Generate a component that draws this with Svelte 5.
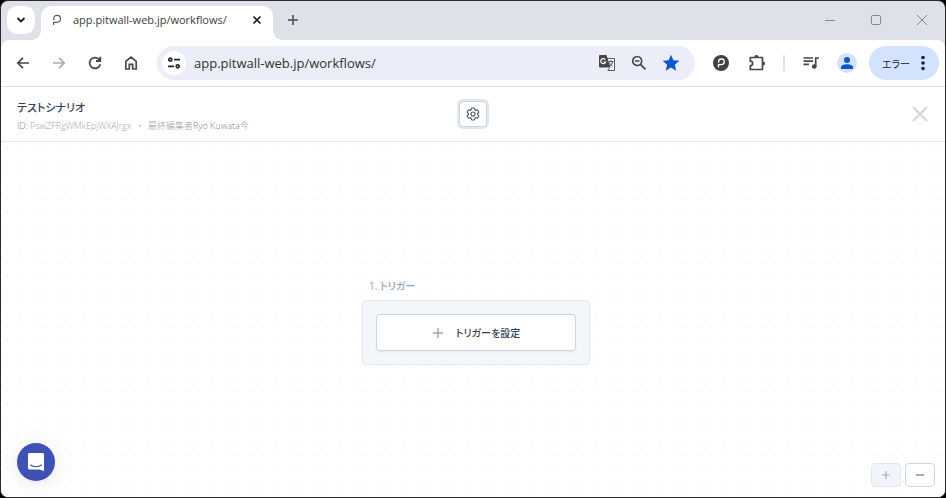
<script>
  const offsets = [0, 13, 26, 38, 51];
  let address = $state('app.pitwall-web.jp/workflows/');
</script>

<div class="window">
  <div class="tabstrip">
    <button class="search-tabs" aria-label="タブを検索">
      <svg width="12" height="12" viewBox="0 0 12 12"><path d="M2.500 4 6 7.500 9.500 4" fill="none" stroke="#1f1f1f" stroke-width="1.800" /></svg>
    </button>
    <div class="tab">
      <svg width="10" height="12" viewBox="0 0 10 12"><path d="M1.600 11V8.300H4.800Q8.500 8.300 8.500 4.800Q8.500 1.400 5.200 1.400Q1.800 1.400 1.800 4.500V6" fill="none" stroke="#55585c" stroke-width="1.200" /></svg>
      <span class="tab-title">app.pitwall-web.jp/workflows/</span>
      <button class="plain" aria-label="タブを閉じる">
        <svg width="10" height="10" viewBox="0 0 10 10"><path d="m1.500 1.500 7 7m0-7-7 7" stroke="#1f1f1f" stroke-width="1.700" /></svg>
      </button>
    </div>
    <button class="plain new-tab" aria-label="新しいタブ">
      <svg width="12" height="12" viewBox="0 0 12 12"><path d="M6 1v10M1 6h10" stroke="#474747" stroke-width="1.500" /></svg>
    </button>
    <div class="controls">
      <button class="plain" aria-label="最小化"><svg width="12" height="12" viewBox="0 0 12 12"><path d="M1 6.500h10" stroke="#85888c" /></svg></button>
      <button class="plain" aria-label="最大化"><svg width="12" height="12" viewBox="0 0 12 12"><rect x="1.500" y="1.500" width="9" height="9" rx="1" fill="none" stroke="#85888c" /></svg></button>
      <button class="plain" aria-label="閉じる"><svg width="12" height="12" viewBox="0 0 12 12"><path d="m1 1 10 10M11 1 1 11" stroke="#85888c" /></svg></button>
    </div>
  </div>

  <div class="toolbar">
    <nav class="nav">
      <button class="plain" aria-label="戻る"><svg width="16" height="16" viewBox="0 0 16 16"><path d="M14 8H3M8 2.800 2.800 8 8 13.200" fill="none" stroke="#474747" stroke-width="1.700" /></svg></button>
      <button class="plain" aria-label="進む"><svg width="16" height="16" viewBox="0 0 16 16"><path d="M2 8h11M8 2.800 13.200 8 8 13.200" fill="none" stroke="#ababab" stroke-width="1.700" /></svg></button>
      <button class="plain" aria-label="再読み込み"><svg width="16" height="16" viewBox="0 0 16 16"><path d="M13.300 9.200A5.400 5.400 0 1 1 12 4.300L13.400 6M13.300 1.800V6H9" fill="none" stroke="#474747" stroke-width="1.800" /></svg></button>
      <button class="plain" aria-label="ホーム"><svg width="16" height="16" viewBox="0 0 16 16"><path d="M2.800 6.300 8 2l5.200 4.300V14H9.700V9.300H6.300V14H2.800Z" fill="none" stroke="#474747" stroke-width="1.700" /></svg></button>
    </nav>
    <div class="omnibox">
      <button class="site-info" aria-label="サイト情報">
        <svg width="14" height="12" viewBox="0 0 14 12" fill="none" stroke="#262626" stroke-width="1.700"><circle cx="3.300" cy="2.700" r="1.500" /><path d="M7 2.700h6M1 9.300h6" /><circle cx="10.700" cy="9.300" r="1.500" /></svg>
      </button>
      <input class="url" aria-label="アドレス" bind:value={address} />
      <button class="plain" aria-label="翻訳">
        <svg width="18" height="18" viewBox="0 0 18 18"><path d="M8 4.500h8.500v12H10" fill="#fff" stroke="#55585c" /><path d="M2 1h6.500L12.500 13.500H2a1 1 0 0 1-1-1V2a1 1 0 0 1 1-1Z" fill="#474747" /><path d="M7.300 5.700A2.500 2.500 0 1 0 7.600 8H5.400" fill="none" stroke="#fff" stroke-width="1.200" /><path d="M10.500 7.500h5M13 6v1.500M14.800 7.500q-.8 3-3 4.500M11.500 8.500q1.500 3 3.500 4M9.500 16.500l2.500-3" fill="none" stroke="#55585c" /></svg>
      </button>
      <button class="plain" aria-label="ズーム">
        <svg width="18" height="18" viewBox="0 0 18 18" fill="none" stroke="#474747" stroke-width="1.700"><circle cx="7.200" cy="7" r="4.500" /><path d="m10.500 10.300 5 5" /><path d="M5 7h4.400" stroke-width="1.400" /></svg>
      </button>
      <button class="plain" aria-label="ブックマーク">
        <svg width="18" height="18" viewBox="0 0 18 18"><path d="m9 .8 2.400 5.500 6 .5-4.500 4 1.300 5.900L9 13.500l-5.200 3.200 1.300-5.900-4.500-4 6-.5Z" fill="#0b57d0" /></svg>
      </button>
    </div>
    <div class="extensions">
      <button class="plain" aria-label="Pitwall">
        <svg width="18" height="18" viewBox="0 0 18 18"><circle cx="9" cy="9" r="8" fill="#3f4246" /><path d="M6.500 13.500V10.600H9.300Q12.300 10.600 12.300 7.800Q12.300 5 9.500 5Q6.600 5 6.600 7.800V8.800" fill="none" stroke="#fff" stroke-width="1.300" /></svg>
      </button>
      <button class="plain" aria-label="拡張機能">
        <svg width="18" height="18" viewBox="0 0 18 18"><path d="M2.300 3.500h12.200v12H2.300v-3.700a2.200 2.200 0 0 0 0-4.600Z" fill="none" stroke="#474747" stroke-width="1.700" stroke-linejoin="round" /><path d="M6.300 3a2.100 2.100 0 0 1 4.200 0ZM15 7.400a2.100 2.100 0 0 1 0 4.200Z" fill="#474747" /></svg>
      </button>
      <span class="divider"></span>
      <button class="plain" aria-label="メディア">
        <svg width="18" height="18" viewBox="0 0 18 18"><path d="M1.500 4h9.500M1.500 7.200h9.500M1.500 10.400h5.500M13.700 13V4h3.300" fill="none" stroke="#474747" stroke-width="1.700" /><circle cx="12.200" cy="12.500" r="2.300" fill="#474747" /></svg>
      </button>
      <button class="profile" aria-label="プロフィール">
        <svg width="14" height="14" viewBox="0 0 14 14" fill="#0b57d0"><circle cx="7" cy="4" r="3" /><path d="M1 13v-1.800C1 9.200 4 8.200 7 8.200s6 1 6 3V13Z" /></svg>
      </button>
    </div>
    <button class="error">
      <span>エラー</span>
      <svg width="6" height="16" viewBox="0 0 6 16" fill="#14213f"><circle cx="3" cy="2.500" r="1.800" /><circle cx="3" cy="8" r="1.800" /><circle cx="3" cy="13.500" r="1.800" /></svg>
    </button>
  </div>

  <header class="header">
    <div class="heading">
      <h1>テストシナリオ</h1>
      <p><span class="label">ID:</span> PswZFRgWMkEpjWXAJrgx<span class="sep">・</span>最終編集者<span class="label">Ryo Kuwata</span>今</p>
    </div>
    <button class="settings" aria-label="設定">
      <svg width="16" height="16" viewBox="0 0 24 24" fill="none" stroke="#475569" stroke-width="1.700" stroke-linejoin="round"><path d="M9.600 3.900c.1-.5.600-.9 1.100-.9h2.600c.5 0 1 .4 1.100.9l.2 1.300c.1.400.3.700.6.900l.3.200c.3.200.7.200 1.100.1l1.200-.5c.5-.2 1.100 0 1.400.5l1.300 2.200c.3.500.2 1.100-.3 1.400l-1 .8c-.3.300-.4.600-.4 1v.4c0 .4.100.7.400 1l1 .8c.4.400.5 1 .3 1.400l-1.300 2.200c-.3.500-.9.700-1.400.5l-1.200-.5c-.4-.1-.8-.1-1.100.1l-.3.200c-.3.200-.5.500-.6.900l-.2 1.300c-.1.500-.6.900-1.100.9h-2.600c-.5 0-1-.4-1.100-.9l-.2-1.300c-.1-.4-.3-.7-.6-.9l-.3-.2c-.3-.2-.7-.2-1.100-.1l-1.200.5c-.5.200-1.100 0-1.400-.5l-1.300-2.200c-.3-.5-.2-1.100.3-1.400l1-.8c.3-.3.400-.6.400-1v-.4c0-.4-.1-.7-.4-1l-1-.8c-.4-.4-.5-1-.3-1.400l1.300-2.200c.3-.5.900-.7 1.400-.5l1.200.5c.4.100.8.100 1.100-.1l.3-.2c.3-.2.500-.5.600-.9Z" /><circle cx="12" cy="12" r="3" /></svg>
    </button>
    <button class="plain close" aria-label="閉じる">
      <svg width="16" height="16" viewBox="0 0 16 16"><path d="m1 1 14 14M15 1 1 15" stroke="#cbd5e1" stroke-width="1.800" /></svg>
    </button>
  </header>

  <main class="canvas">
    <svg class="dots" width="100%" height="100%" aria-hidden="true">
      <defs>
        <pattern id="grid" width="64" height="64" patternUnits="userSpaceOnUse">
          {#each offsets as y}
            {#each offsets as x}
              <rect x={x + 6} y={y + 6} width="1" height="1" fill="#e3e5e9" />
            {/each}
          {/each}
        </pattern>
      </defs>
      <rect width="100%" height="100%" fill="url(#grid)" />
    </svg>
    <section class="step">
      <h2>1. トリガー</h2>
      <div class="card">
        <button class="trigger">
          <svg width="12" height="12" viewBox="0 0 12 12"><path d="M6 1v10M1 6h10" stroke="#94a3b8" stroke-width="1.400" /></svg>
          <span>トリガーを設定</span>
        </button>
      </div>
    </section>
    <button class="chat" aria-label="チャット">
      <svg width="18" height="20" viewBox="0 0 18 20"><path d="M2.500 1h13A1.500 1.500 0 0 1 17 2.500V19l-4.500-1.500h-10A1.500 1.500 0 0 1 1 16V2.500A1.500 1.500 0 0 1 2.500 1Z" fill="#fff" /><path d="M3.500 13Q9 16.500 14.500 13" fill="none" stroke="#3f51b5" stroke-width="1.100" stroke-linecap="round" /></svg>
    </button>
    <div class="zoom">
      <button aria-label="拡大" disabled><svg width="10" height="10" viewBox="0 0 10 10"><path d="M5 1v8M1 5h8" stroke="#a3afc0" stroke-width="1.200" /></svg></button>
      <button aria-label="縮小"><svg width="10" height="10" viewBox="0 0 10 10"><path d="M1 5h8" stroke="#475569" stroke-width="1.200" /></svg></button>
    </div>
  </main>
</div>

<style>
  :global(body) {
    background: #000;
  }
  .window {
    box-sizing: border-box;
    height: 100vh;
    display: flex;
    flex-direction: column;
    overflow: hidden;
    border: 1px solid #28292c;
    border-radius: 8px;
    background: #dee1e8;
    font-family: 'Open Sans', 'Noto Sans CJK JP', sans-serif;
    font-feature-settings: 'palt';
  }
  button {
    font: inherit;
    font-feature-settings: inherit;
    box-sizing: border-box;
    display: flex;
    align-items: center;
    justify-content: center;
    padding: 0;
    border: 0;
    flex: none;
  }
  svg {
    display: block;
    flex: none;
  }
  .plain {
    background: none;
  }
  .tabstrip {
    display: flex;
    align-items: flex-start;
    height: 39px;
    flex: none;
    padding-left: 6px;
  }
  .search-tabs {
    width: 28px;
    height: 28px;
    margin: 5px 6px 0 0;
    border-radius: 10px;
    background: #fff;
  }
  .tab {
    position: relative;
    box-sizing: border-box;
    display: flex;
    align-items: center;
    width: 232px;
    height: 34px;
    margin-top: 5px;
    padding: 0 11px 6px;
    border-radius: 10px 10px 0 0;
    background: #fff;
  }
  .tab::before,
  .tab::after {
    content: '';
    position: absolute;
    bottom: 0;
    width: 10px;
    height: 10px;
  }
  .tab::before {
    right: 100%;
    background: radial-gradient(circle at 0 0, transparent 10px, #fff 10px);
  }
  .tab::after {
    left: 100%;
    background: radial-gradient(circle at 100% 0, transparent 10px, #fff 10px);
  }
  .tab-title {
    flex: 1;
    margin-left: 11px;
    font-size: 11px;
    line-height: 16px;
    color: #3c4043;
    white-space: nowrap;
  }
  .new-tab {
    width: 28px;
    height: 28px;
    margin: 5px 0 0 6px;
  }
  .controls {
    display: flex;
    margin-left: auto;
  }
  .controls button {
    width: 46px;
    height: 38px;
  }
  .toolbar {
    display: flex;
    align-items: center;
    box-sizing: border-box;
    height: 47px;
    flex: none;
    padding: 0 6px 0 4px;
    border-bottom: 1px solid #dfe1e3;
    border-radius: 8px 8px 0 0;
    background: #fff;
  }
  .nav {
    display: flex;
  }
  .nav button {
    width: 36px;
    height: 34px;
  }
  .omnibox {
    display: flex;
    align-items: center;
    box-sizing: border-box;
    flex: 1;
    min-width: 0;
    height: 34px;
    margin-left: 8px;
    padding: 0 8px 0 5px;
    border-radius: 17px;
    background: #ebeef8;
  }
  .omnibox .plain {
    width: 32px;
    height: 32px;
  }
  .site-info {
    width: 24px;
    height: 24px;
    border-radius: 12px;
    background: #fff;
  }
  .url {
    flex: 1;
    min-width: 0;
    margin: 0 0 0 8px;
    padding: 0;
    border: 0;
    outline: 0;
    background: none;
    font-family: inherit;
    font-size: 13px;
    line-height: 20px;
    color: #303134;
  }
  .extensions {
    display: flex;
    align-items: center;
    margin: 0 12px 0 8px;
  }
  .extensions .plain {
    width: 36px;
    height: 34px;
  }
  .divider {
    width: 2px;
    height: 16px;
    margin: 0 8px;
    background: #d3e3fd;
  }
  .profile {
    width: 20px;
    height: 20px;
    margin-left: 8px;
    border-radius: 10px;
    background: #d3e3fd;
  }
  .error {
    gap: 10px;
    width: 70px;
    height: 34px;
    border-radius: 17px;
    background: #d3e3fd;
    color: #14213f;
    font-size: 10px;
  }
  .header {
    display: grid;
    grid-template-columns: 1fr auto 1fr;
    align-items: center;
    box-sizing: border-box;
    height: 55px;
    flex: none;
    padding: 0 16px;
    border-bottom: 1px solid #e2e8f0;
    background: #fff;
  }
  .heading {
    padding-top: 4px;
  }
  h1 {
    margin: 0;
    font-size: 11px;
    line-height: 20px;
    font-weight: 500;
    color: #334155;
  }
  p {
    margin: 0;
    font-size: 9px;
    line-height: 16px;
    font-weight: 300;
    color: #9ba3af;
    white-space: nowrap;
  }
  .label {
    color: #7b828d;
  }
  .sep {
    margin: 0 6px;
  }
  .settings {
    width: 28px;
    height: 26px;
    border: 1px solid #cbd5e1;
    border-radius: 4px;
    background: #fff;
    box-shadow: 0 0 0 2px #e2e8f0;
  }
  .close {
    justify-self: end;
    width: 18px;
    height: 18px;
  }
  .canvas {
    position: relative;
    display: flex;
    align-items: center;
    justify-content: center;
    flex: 1;
    min-height: 0;
    padding: 4px 0 0 6px;
    background: #fff;
  }
  .dots {
    position: absolute;
    inset: 0;
  }
  .step {
    position: relative;
  }
  h2 {
    margin: 0 0 6px 7px;
    font-size: 10px;
    line-height: 16px;
    font-weight: 500;
    color: #94a3b8;
  }
  .card {
    padding: 13px;
    border: 1px solid #e2e8f0;
    border-radius: 4px;
    background: #f3f7fa;
  }
  .trigger {
    gap: 12px;
    width: 200px;
    height: 37px;
    border: 1px solid #cbd5e1;
    border-radius: 4px;
    background: #fff;
    box-shadow: 0 1px 2px #0000000d;
    font-size: 10px;
    font-weight: 500;
    color: #334155;
  }
  .chat {
    position: absolute;
    left: 16px;
    bottom: 16px;
    width: 38px;
    height: 38px;
    border-radius: 19px;
    background: #3f51b5;
    box-shadow: 0 1px 4px #0000000f, 0 2px 24px #00000018;
  }
  .zoom {
    position: absolute;
    right: 10px;
    bottom: 10px;
    display: flex;
    gap: 4px;
  }
  .zoom button {
    width: 30px;
    height: 24px;
    border: 1px solid #cbd5e1;
    border-radius: 4px;
    background: #fff;
  }
  .zoom button:disabled {
    border-color: #e2e8f0;
    background: #f1f5f9;
  }
</style>
